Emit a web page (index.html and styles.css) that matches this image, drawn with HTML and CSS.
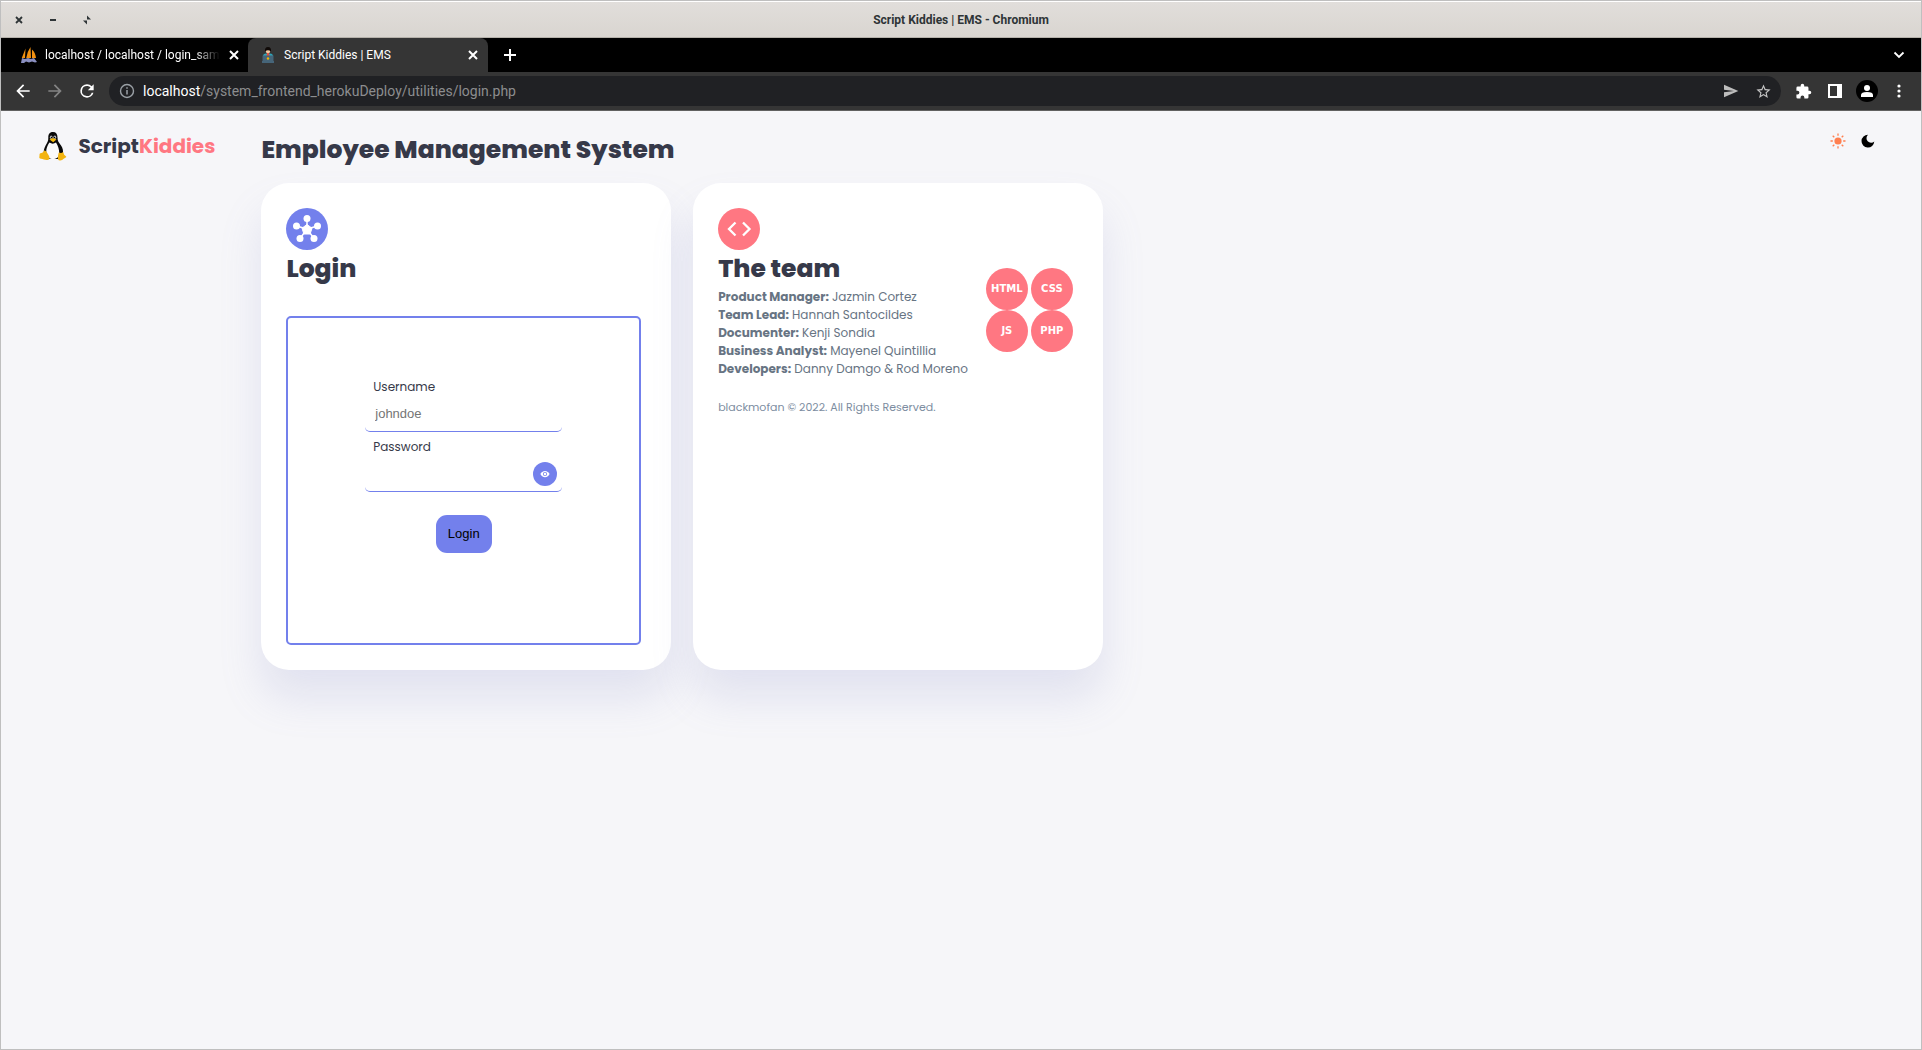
FILE: index.html
```html
<!DOCTYPE html>
<html lang="en">
<head>
<meta charset="utf-8">
<meta name="viewport" content="width=device-width, initial-scale=1">
<title>Script Kiddies | EMS</title>
<link rel="stylesheet" href="styles.css">
</head>
<body>
<div class="window">
  <header class="titlebar">
    <div class="window-controls">
      <button type="button" aria-label="Close window"><svg width="8" height="8" viewBox="0 0 8 8"><path d="M1 1l6 6M7 1l-6 6" stroke="#2e3436" stroke-width="1.800" fill="none"/></svg></button>
      <button type="button" aria-label="Minimize"><svg width="8" height="8" viewBox="0 0 8 8"><path d="M1 4h6" stroke="#2e3436" stroke-width="2"/></svg></button>
      <button type="button" aria-label="Restore"><svg width="10" height="10" viewBox="0 0 10 10"><path d="M5 .5L9 4.500H5zM5 9.500L1 5.500h4z" fill="#2e3436"/></svg></button>
    </div>
    <div class="window-title">Script Kiddies | EMS - Chromium</div>
    <div></div>
  </header>

  <nav class="tabs" aria-label="Tabs">
    <div class="tab">
      <svg class="favicon" viewBox="0 0 16 16"><path d="M4.500 1.500L4 11H.8zM9.500 0l.5 11H5.200Q6 5 9.500 0zM11 2.500c2.500 2 3.500 5 4 8.500h-4z" fill="#f29111"/><path d="M0 16l1-5 3 1 3-1 3 1 3-1 3 4-2 .5-3-1-3 1-3-1-2 1.500z" fill="#8a8fc0"/></svg>
      <span class="tab-label fade">localhost / localhost / login_sam</span>
      <button type="button" class="tab-close" aria-label="Close tab"><svg width="10" height="10" viewBox="0 0 10 10"><path d="M1 1l8 8M9 1L1 9" stroke="#fff" stroke-width="2"/></svg></button>
    </div>
    <div class="tab active">
      <svg class="favicon" viewBox="0 0 16 16"><path d="M3 9.500q0-3 3-3h4q3 0 3 3z" fill="#2ea5b8"/><path d="M7 6h2l.8 4H6.200z" fill="#e64c3c"/><circle cx="8" cy="4" r="2.300" fill="#f2c6a0"/><path d="M5 4.500Q4.500 0 8 0t3 4.500Q8 1.800 5 4.500z" fill="#100a08"/><path d="M2.500 8.500h11V14h.5v2H2v-2h.5z" fill="#466579"/><circle cx="8" cy="11.500" r="1.200" fill="#f4b400"/></svg>
      <span class="tab-label">Script Kiddies | EMS</span>
      <button type="button" class="tab-close" aria-label="Close tab"><svg width="10" height="10" viewBox="0 0 10 10"><path d="M1 1l8 8M9 1L1 9" stroke="#fff" stroke-width="2"/></svg></button>
    </div>
    <button type="button" class="tab-new" aria-label="New tab"><svg width="12" height="12" viewBox="0 0 12 12"><path d="M6 0v12M0 6h12" stroke="#fff" stroke-width="2"/></svg></button>
    <button type="button" class="tab-search" aria-label="Search tabs"><svg width="12" height="8" viewBox="0 0 12 8"><path d="M1.500 1.500L6 6l4.500-4.500" stroke="#fff" stroke-width="1.800" fill="none"/></svg></button>
  </nav>

  <div class="toolbar">
    <button type="button" class="tool" aria-label="Back"><svg width="20" height="20" viewBox="0 0 24 24"><path d="M20 11H7.830l5.590-5.590L12 4l-8 8 8 8 1.410-1.410L7.830 13H20z" fill="#fff"/></svg></button>
    <button type="button" class="tool" aria-label="Forward"><svg width="20" height="20" viewBox="0 0 24 24"><path d="M12 4l-1.410 1.410L16.170 11H4v2h12.170l-5.580 5.590L12 20l8-8z" fill="#848484"/></svg></button>
    <button type="button" class="tool" aria-label="Reload"><svg width="20" height="20" viewBox="0 0 24 24"><path d="M17.650 6.350A7.960 7.960 0 0 0 12 4a8 8 0 1 0 7.730 10h-2.080A6 6 0 1 1 12 6c1.660 0 3.140.69 4.220 1.780L13 11h7V4z" fill="#fff"/></svg></button>
    <div class="omnibox">
      <svg width="16" height="16" viewBox="0 0 16 16"><circle cx="8" cy="8" r="6.500" fill="none" stroke="#9aa0a6" stroke-width="1.400"/><path d="M8 7v4.500M8 4.300v1.500" stroke="#9aa0a6" stroke-width="1.500"/></svg>
      <span class="url"><span class="host">localhost</span>/system_frontend_herokuDeploy/utilities/login.php</span>
      <button type="button" class="tool" aria-label="Share"><svg width="16" height="16" viewBox="0 0 24 24"><path d="M1.500 21.500L23 12 1.500 2.500V10l15 2-15 2z" fill="#bdbdbd"/></svg></button>
      <button type="button" class="tool" aria-label="Bookmark"><svg width="17" height="17" viewBox="0 0 24 24"><path d="M22 9.240l-7.190-.62L12 2 9.190 8.630 2 9.240l5.460 4.730L5.820 21 12 17.270 18.180 21l-1.630-7.030zM12 15.400l-3.760 2.270 1-4.280-3.320-2.880 4.380-.38L12 6.100l1.710 4.040 4.380.38-3.320 2.880 1 4.280z" fill="#c4c4c4"/></svg></button>
    </div>
    <button type="button" class="tool" aria-label="Extensions"><svg width="17" height="17" viewBox="0 0 24 24"><path d="M20.500 11H19V7a2 2 0 0 0-2-2h-4V3.500a2.500 2.500 0 0 0-5 0V5H4a2 2 0 0 0-2 2v3.800h1.500a2.700 2.700 0 0 1 0 5.400H2V20a2 2 0 0 0 2 2h3.800v-1.500a2.700 2.700 0 0 1 5.400 0V22H17a2 2 0 0 0 2-2v-4h1.500a2.500 2.500 0 0 0 0-5z" fill="#fff"/></svg></button>
    <button type="button" class="tool" aria-label="Side panel"><svg width="14" height="14" viewBox="0 0 14 14"><path d="M0 0h14v14H0zM2 2v10h7V2z" fill="#fff" fill-rule="evenodd"/></svg></button>
    <button type="button" class="tool" aria-label="Profile"><svg width="22" height="22" viewBox="0 0 22 22"><circle cx="11" cy="11" r="11" fill="#000"/><circle cx="11" cy="8" r="3" fill="#fff"/><path d="M5 17v-2q0-3 6-3t6 3v2z" fill="#fff"/></svg></button>
    <button type="button" class="tool" aria-label="Menu"><svg width="4" height="14" viewBox="0 0 4 14"><g fill="#fff"><circle cx="2" cy="2" r="1.600"/><circle cx="2" cy="7" r="1.600"/><circle cx="2" cy="12" r="1.600"/></g></svg></button>
  </div>

  <div class="page">
    <aside class="brand">
      <svg width="28" height="30" viewBox="0 0 28 30"><path d="M14 1c-3.700 0-4.800 2.500-4.700 6 .1 3-1 4.500-2.700 7.500C4.800 18 4.500 20 5 24l3 4h12l3.500-4c1.200-4 .4-7-1.800-10-2.200-3-3.200-4-3.200-7.500C18.500 3 17 1 14 1z" fill="#0a0a0a"/><path d="M10.500 11.500c-2.500 3.500-4 8-2.800 12 1 3.500 3 4.500 6.300 4.500s6-1.500 6.200-5.500c.2-4-1.200-8-3.200-11-2 1.500-4.500 1.500-6.500 0z" fill="#fafafa"/><ellipse cx="12.200" cy="6.300" rx="1.300" ry="1.800" fill="#bbb"/><ellipse cx="15.800" cy="6.300" rx="1.400" ry="1.800" fill="#bbb"/><circle cx="12.500" cy="6.500" r=".7"/><circle cx="15.500" cy="6.500" r=".7"/><path d="M10.500 8.500L14 7l3.500 1.500-3.300 2.700z" fill="#f5b90a"/><path d="M5.500 19.500c1.500-.5 2.500 2 4 4.500s1.500 4.500-1 5-4-1-6.500-1.200-1.500-2-1.500-3.300 0-2.300 2-2.500 2-2 3-2.500z" fill="#f3b40f"/><path d="M20 21.500c1 .5 3 .8 4-.5 1 1 .5 2.500 2 3.500s2 1.500 0 2.500-3 2.500-5 2.500-2.500-2-2-4 0-3 1-4z" fill="#f3b40f"/></svg>
      <h2 class="brand-name">Script<span>Kiddies</span></h2>
    </aside>

    <main class="content">
      <h1>Employee Management System</h1>
      <div class="cards">
        <section class="card">
          <svg class="badge" viewBox="0 0 42 42"><circle cx="21" cy="21" r="21" fill="#7380ec"/><path d="M21 21V11M21 21l10.500-3M21 21l7 9.500M21 21l-7 9.500M21 21l-10.500-3" stroke="#fff" stroke-width="1.500"/><path d="M21 16.500l5 3.700-1.900 5.800h-6.200l-1.900-5.800z" fill="#fff" stroke="#fff" stroke-linejoin="round"/><g fill="#fff"><circle cx="21" cy="10.500" r="3.500"/><circle cx="31.500" cy="18" r="3.500"/><circle cx="28" cy="30.500" r="3.500"/><circle cx="14" cy="30.500" r="3.500"/><circle cx="10.500" cy="18" r="3.500"/></g></svg>
          <h2>Login</h2>
          <form class="login">
            <label for="username">Username</label>
            <div class="field"><input id="username" type="text" placeholder="johndoe"></div>
            <label for="password">Password</label>
            <div class="field"><input id="password" type="password"><button type="button" class="reveal" aria-label="Show password"><svg width="10" height="10" viewBox="0 0 24 24"><path d="M12 4.500C7 4.500 2.730 7.610 1 12c1.730 4.390 6 7.500 11 7.500s9.270-3.110 11-7.500c-1.730-4.390-6-7.500-11-7.500zM12 17a5 5 0 1 1 0-10 5 5 0 0 1 0 10zm0-8a3 3 0 1 0 0 6 3 3 0 0 0 0-6z" fill="#fff"/></svg></button></div>
            <button type="submit" class="submit">Login</button>
          </form>
        </section>

        <section class="card">
          <svg class="badge" viewBox="0 0 42 42"><circle cx="21" cy="21" r="21" fill="#ff7782"/><path d="M17.500 14.500L11 21l6.500 6.500M25 14.500l6.500 6.500-6.500 6.500" stroke="#fff" stroke-width="2.300" fill="none"/></svg>
          <div class="team">
            <div>
              <h2>The team</h2>
              <ul class="members">
                <li><b>Product Manager:</b> Jazmin Cortez</li>
                <li><b>Team Lead:</b> Hannah Santocildes</li>
                <li><b>Documenter:</b> Kenji Sondia</li>
                <li><b>Business Analyst:</b> Mayenel Quintillia</li>
                <li><b>Developers:</b> Danny Damgo &amp; Rod Moreno</li>
              </ul>
            </div>
            <div class="stack"><span>HTML</span><span>CSS</span><span>JS</span><span>PHP</span></div>
          </div>
          <small>blackmofan © 2022. All Rights Reserved.</small>
        </section>
      </div>
    </main>

    <div class="theme">
      <button type="button" aria-label="Light theme"><svg width="16" height="16" viewBox="0 0 16 16"><circle cx="8" cy="8" r="3.600" fill="#ff7f50"/><path d="M8 .5v2.300M8 13.200v2.300M.5 8h2.300M13.200 8h2.300M2.700 2.700l1.600 1.600M11.700 11.700l1.600 1.600M2.700 13.300l1.600-1.600M11.700 4.300l1.600-1.600" stroke="#ff7f50" stroke-width="1.300"/></svg></button>
      <button type="button" aria-label="Dark theme"><svg width="14" height="14" viewBox="0 0 14 14"><path d="M7 .7A6.400 6.400 0 1 0 13.300 7.600 4.100 4.100 0 1 1 7 .7z" fill="#000"/></svg></button>
    </div>
  </div>
</div>
</body>
</html>
```
FILE: styles.css
```css
* { box-sizing: border-box; margin: 0; padding: 0; }

body {
  background: #f6f6f9;
  color: #363949;
  font-family: "Poppins", Inter, sans-serif;
  font-size: 12px;
}

button { border: 0; background: none; cursor: pointer; }
svg { display: block; flex: none; }

.window {
  display: flex;
  flex-direction: column;
  min-height: 100vh;
  border: 1px solid #bfbfbf;
}

/* Window frame */
.titlebar {
  display: grid;
  grid-template-columns: 1fr auto 1fr;
  align-items: center;
  height: 37px;
  border-top: 1px solid #fff;
  border-bottom: 1px solid #b5b1aa;
  background: linear-gradient(#e1dedb, #d9d5d0);
}
.window-controls { display: flex; padding-left: 1px; }
.window-controls button { display: grid; place-items: center; width: 34px; height: 34px; }
.window-title { color: #2e3436; font: bold 12px/16px Roboto, sans-serif; }

/* Tab strip */
.tabs {
  display: flex;
  height: 34px;
  background: #000;
  color: #fff;
  font: 12px/16px Roboto, sans-serif;
}
.tab { display: flex; align-items: center; gap: 8px; width: 247px; padding: 0 9px 0 20px; }
.tab.active { width: 240px; padding-left: 12px; border-radius: 8px 8px 0 0; background: #353535; }
.favicon { width: 16px; height: 16px; }
.tab-label { flex: 1; white-space: nowrap; }
.fade { -webkit-mask-image: linear-gradient(90deg, #000 85%, transparent); mask-image: linear-gradient(90deg, #000 85%, transparent); }
.tab-close { padding: 1px; }
.tab-new { display: grid; place-items: center; width: 44px; }
.tab-search { display: grid; place-items: center; width: 44px; margin-left: auto; }

/* Address bar */
.toolbar {
  display: flex;
  align-items: center;
  height: 39px;
  padding: 0 6px;
  border-bottom: 1px solid #616161;
  background: #353535;
}
.tool { display: grid; place-items: center; width: 32px; height: 30px; }
.omnibox {
  display: flex;
  flex: 1;
  align-items: center;
  height: 30px;
  margin: 0 6px;
  padding: 0 2px 0 10px;
  border-radius: 15px;
  background: #202124;
}
.url { flex: 1; padding-left: 8px; color: #8c8d8f; font: 14px/20px Roboto, sans-serif; }
.host { color: #fff; }

/* Page */
.page {
  display: grid;
  grid-template-columns: 197px 1fr 323px;
  gap: 25px;
  width: 96%;
  margin: 0 auto;
}
.brand { display: flex; align-items: center; gap: 11px; height: 30px; margin-top: 20px; }
.brand-name { font-size: 20px; line-height: 30px; }
.brand-name span { color: #ff7782; }
.content { padding-top: 20px; }
h1, .card h2 { font-size: 25px; font-weight: 800; line-height: 38px; }
.cards { display: grid; grid-template-columns: repeat(3, 1fr); gap: 22px; margin-top: 14px; }
.card {
  height: 487px;
  padding: 25px;
  border-radius: 28px;
  background: #fff;
  box-shadow: 0 28px 42px rgba(132, 139, 200, .18);
}
.badge { width: 42px; height: 42px; }

.login {
  display: flex;
  flex-direction: column;
  align-items: center;
  justify-content: center;
  height: 329px;
  margin: 28px 5px 0 0;
  padding-bottom: 32px;
  border: 2px solid #7380ec;
  border-radius: 5px;
}
.login label { width: 197px; height: 20px; padding-left: 8px; line-height: 20px; }
.field {
  display: flex;
  align-items: center;
  width: 197px;
  height: 35px;
  margin-bottom: 5px;
  padding: 0 5px 0 10px;
  border-bottom: 1px solid #7380ec;
  border-radius: 5px;
}
.field input {
  flex: 1;
  min-width: 0;
  border: 0;
  outline: 0;
  background: none;
  font: 13px/18px "Liberation Sans", sans-serif;
}
.field input::placeholder { color: #757575; }
.reveal { display: grid; place-items: center; width: 24px; height: 24px; border-radius: 50%; background: #7380ec; }
.submit {
  height: 38px;
  margin-top: 18px;
  padding: 0 12px;
  border-radius: 11px;
  background: #7380ec;
  color: #000;
  font: 13px/18px "Liberation Sans", sans-serif;
}

.team { display: flex; justify-content: space-between; padding-right: 5px; }
.members { list-style: none; color: #677483; line-height: 18px; white-space: nowrap; }
.stack { display: grid; grid-template-columns: 42px 42px; gap: 0 3px; align-content: start; margin-top: 18px; }
.stack span {
  display: grid;
  place-items: center;
  height: 42px;
  border-radius: 50%;
  background: #ff7782;
  color: #fff;
  font: bold 10px/12px "DejaVu Sans", sans-serif;
}
small { display: block; margin-top: 21px; color: #7d8da1; font-size: 11px; line-height: 16px; }

.theme { display: flex; align-items: center; justify-content: flex-end; gap: 15px; height: 16px; margin: 22px 8px 0 0; }
```
